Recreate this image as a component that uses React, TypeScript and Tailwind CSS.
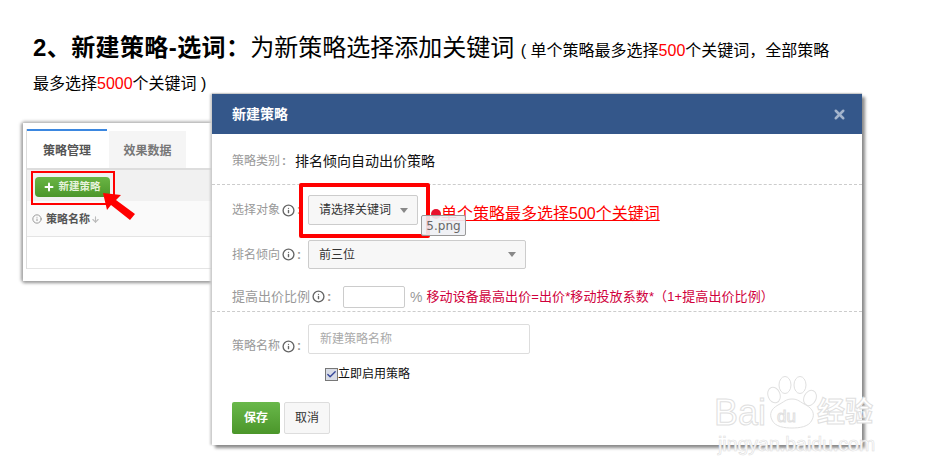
import { ArrowDown, Check, Info, Plus, X } from 'lucide-react';
import type { ReactNode } from 'react';

const font = 'font-["Liberation_Sans","Noto_Sans_CJK_SC",sans-serif]';

function FieldLabel({ children, icon = true }: { children: ReactNode; icon?: boolean }) {
  return (
    <span className="flex shrink-0 items-center text-[#999]">
      {children}
      {icon && <Info className="ml-[2px] h-[13px] w-[13px] text-[#666]" strokeWidth={2.5} />}
      <span className="ml-[2px] font-bold">:</span>
    </span>
  );
}

function Caret() {
  return <span className="h-0 w-0 border-x-4 border-t-[5px] border-x-transparent border-t-[#888]" />;
}

function StrategyCard() {
  return (
    <div className="absolute left-[23px] top-[123px] h-[158px] w-[200px] bg-white pl-[3px] pt-[6px] shadow-[-2px_0_3px_#aaa,0_2px_3px_#999,0_-2px_3px_#ccc]">
      <div className="border-l border-[#ddd]">
        {/* tabs */}
        <div className="flex h-[41px] border-b-2 border-[#ddd] text-xs font-bold">
          <div className="flex w-[80px] items-center justify-center border-t-2 border-t-[#3b87e0] bg-white pt-[3px] text-[#555]">
            策略管理
          </div>
          <div className="mt-[2px] flex w-[81px] items-center justify-center border-x-2 border-white bg-[#f5f5f5] pt-[2px] text-[#777]">
            效果数据
          </div>
        </div>
        {/* toolbar */}
        <div className="h-[31px] bg-[#f1f1f1] pl-2 pt-[7px]">
          <button className="flex h-[20px] w-[75px] items-center justify-center gap-1 rounded-sm bg-gradient-to-b from-[#6ab544] to-[#4b962a] pr-[2px] text-[10.5px] font-bold text-[#e6f3dc]">
            <Plus className="h-3 w-3 text-white" strokeWidth={4} />
            新建策略
          </button>
        </div>
        {/* table */}
        <div className="flex h-[36px] items-center gap-1 border-b border-[#e4e4e4] bg-[#fafafa] pl-[5px] pt-[1px] text-[11px] font-bold text-[#555]">
          <Info className="h-[10px] w-[10px] text-[#888]" strokeWidth={2} />
          策略名称
          <ArrowDown className="-ml-[3px] h-[9px] w-[9px] text-[#bbb]" strokeWidth={3} />
        </div>
        <div className="h-[32px] border-b border-[#e4e4e4]" />
      </div>
    </div>
  );
}

function Modal() {
  return (
    <div className="absolute left-[212px] top-[94px] h-[351px] w-[650px] bg-white text-xs shadow-[3px_3px_3px_#8a8a8a,-2px_0_2px_#ccc,0_-1px_1px_#ccc]">
      <div className="flex h-[40px] items-center justify-between bg-[#34578a] pl-5 pr-[15px]">
        <h3 className="text-sm font-bold text-white">新建策略</h3>
        <X className="h-[15px] w-[15px] text-[#a3b4cc]" strokeWidth={4} />
      </div>

      <div className="flex h-[51px] items-center gap-[10px] border-b border-dashed border-[#ccc] pt-[3px] pl-5">
        <FieldLabel icon={false}>策略类别</FieldLabel>
        <span className="-ml-[1px] text-sm text-[#111]">排名倾向自动出价策略</span>
      </div>

      <div className="flex h-[55px] items-center pb-[5px] pl-5">
        <span className="w-[76px]">
          <FieldLabel>选择对象</FieldLabel>
        </span>
        <div className="flex h-[30px] w-[110px] items-center justify-between rounded-[2px] border border-[#ccc] bg-[#f7f7f7] pl-[10px] pr-[9px] text-[#333]">
          请选择关键词
          <Caret />
        </div>
        <span className="ml-[13px] mt-[8px] h-[10px] w-[10px] rounded-full bg-[#e8112d]" />
        <span className="mt-[8px] text-base leading-5 text-[#f00] underline">单个策略最多选择500个关键词</span>
      </div>

      <div className="flex h-[29px] items-center pl-5">
        <span className="w-[76px]">
          <FieldLabel>排名倾向</FieldLabel>
        </span>
        <div className="flex h-[29px] w-[218px] items-center justify-between rounded-[2px] border border-[#ccc] bg-[#f7f7f7] pl-[10px] pr-[9px] text-[#333]">
          前三位
          <Caret />
        </div>
      </div>

      <div className="mt-[17px] flex h-[26px] items-center border-b border-dashed border-[#ccc] pb-[3px] pl-5">
        <span className="w-[111px] text-[13px]">
          <FieldLabel>提高出价比例</FieldLabel>
        </span>
        <div className="h-[22px] w-[62px] rounded-[2px] border border-[#ccc]" />
        <span className="ml-[5px] text-sm text-[#999]">%</span>
        <span className="ml-[4px] text-[13px] tracking-[0.1px] text-[#d0003c]">移动设备最高出价=出价*移动投放系数*（1+提高出价比例）</span>
      </div>

      <div className="mt-3 flex h-[30px] pl-5">
        <span className="mt-[14px] w-[76px]">
          <FieldLabel>策略名称</FieldLabel>
        </span>
        <div className="flex w-[222px] items-center rounded-[2px] border border-[#ddd] pl-[11px] text-[#aaa]">
          新建策略名称
        </div>
      </div>

      <div className="ml-[113px] mt-3 flex items-center text-[#111]">
        <span className="flex h-[13px] w-[13px] items-center justify-center border border-[#777] bg-[#d8dce6]">
          <Check className="h-[11px] w-[11px] text-[#34469a]" strokeWidth={3} />
        </span>
        立即启用策略
      </div>

      <div className="ml-5 mt-[20px] flex gap-1">
        <button className="h-[32px] w-[48px] rounded-[2px] bg-gradient-to-b from-[#69b84a] to-[#4b962a] font-bold text-white">
          保存
        </button>
        <button className="h-[32px] w-[46px] rounded-[2px] border border-[#ddd] bg-[#f7f7f7] text-[#333]">
          取消
        </button>
      </div>
    </div>
  );
}

function Watermark() {
  return (
    <div className="pointer-events-none absolute left-[712px] top-[375px] h-[80px] w-[170px] text-white [-webkit-text-stroke:1px_#e0e0e0]">
      <span className="absolute left-[2px] top-[20px] text-[36px] leading-none">Bai</span>
      <svg className="absolute left-[55px] top-0 h-[56px] w-[50px]" viewBox="0 0 50 56" fill="#fff" stroke="#e0e0e0" strokeWidth="1">
        <ellipse cx="7" cy="20" rx="6" ry="8" transform="rotate(-20 7 20)" />
        <ellipse cx="18" cy="10" rx="6" ry="8.5" />
        <ellipse cx="33" cy="10" rx="6" ry="8.5" />
        <ellipse cx="43" cy="23" rx="6" ry="8" transform="rotate(25 43 23)" />
        <path d="M25 24c-6 0-8 3-14 6-7 4-9 9-6 15 3 7 13 8 20 8s17-1 20-8c3-6 1-11-6-15-6-3-8-6-14-6z" />
      </svg>
      <span className="absolute left-[65px] top-[33px] text-[17px] leading-none">du</span>
      <span className="absolute left-[105px] top-[24px] text-[28px] font-bold leading-none">经验</span>
      <span className="absolute left-[6px] top-[60px] text-[19.5px] leading-none [-webkit-text-stroke:0.6px_#e0e0e0]">jingyan.baidu.com</span>
    </div>
  );
}

export default function App() {
  return (
    <div className={`relative h-[475px] w-[926px] overflow-hidden bg-white ${font}`}>
      <div className="w-[840px] pl-[33px] pt-[32px] text-black">
        <p className="text-base leading-[36px]">
          <span className="text-2xl font-bold tracking-[0.4px]">2、新建策略-选词：</span>
          <span className="text-2xl">为新策略选择添加关键词</span>
          <span className="ml-[2px]"> ( 单个策略最多选择<span className="text-[#f00]">500</span>个关键词，全部策略</span>
        </p>
        <p className="mt-[3px] text-base leading-[24px]">
          最多选择<span className="text-[#f00]">5000</span>个关键词 )
        </p>
      </div>

      <StrategyCard />
      <Modal />

      {/* red callouts drawn over the screenshots */}
      <div className="absolute left-[31px] top-[171px] h-[34px] w-[84px] border-2 border-[#f00]" />
      <svg className="absolute left-[100px] top-[190px] h-[32px] w-[38px]" viewBox="0 0 38 32">
        <path d="M3 3L21 5L16 10L35 24L30 30L11 15L7 20Z" fill="#f00" />
      </svg>
      <div className="absolute left-[299px] top-[183px] h-[55px] w-[131px] rounded-[2px] border-[4px] border-[#f00]" />
      <div className="absolute left-[421px] top-[215px] flex h-[21px] w-[45px] items-center justify-center rounded-[2px] border border-[#999] bg-[#eef0f4]/90 font-['DejaVu_Sans',sans-serif] text-xs text-[#666]">
        5.png
      </div>

      <Watermark />
    </div>
  );
}
